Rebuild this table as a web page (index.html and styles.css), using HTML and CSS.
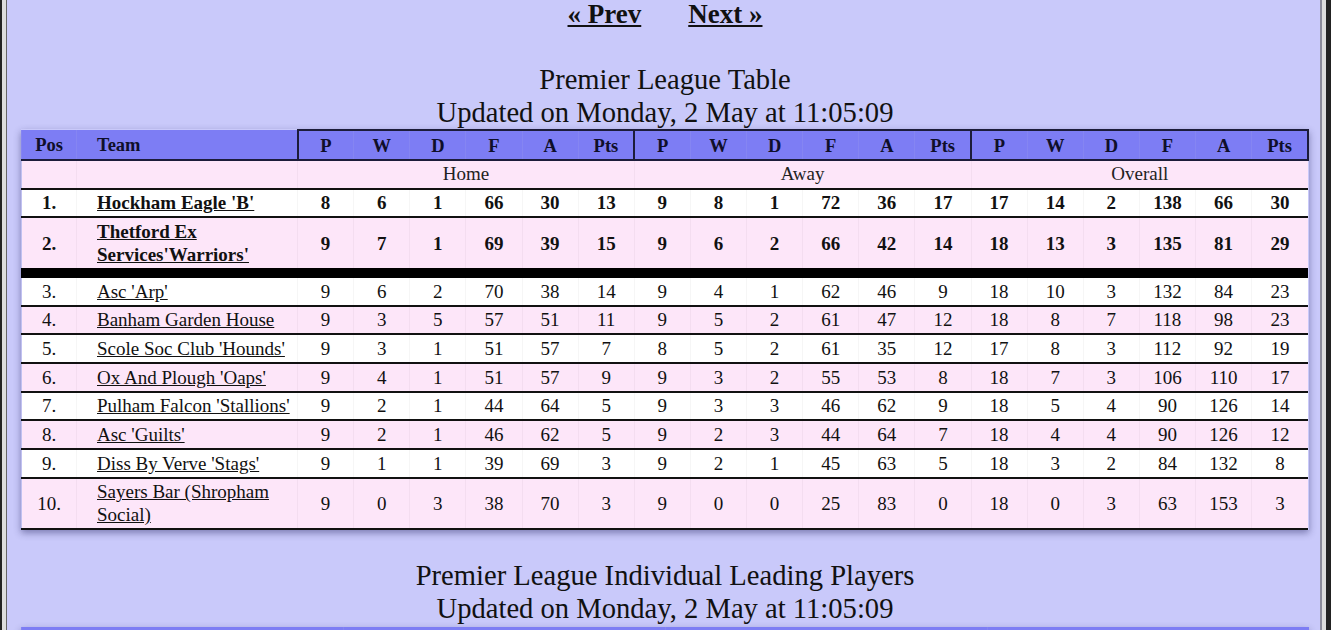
FILE: index.html
```html
<!DOCTYPE html>
<html lang="en">
<head>
<meta charset="utf-8">
<title>Premier League Table</title>
<link rel="stylesheet" href="styles.css">
</head>
<body>
<div class="frame-outer">
<div class="frame-mid">
<div class="page">
  <nav class="pager">
    <a href="#" class="pager-link">« Prev</a>
    <a href="#" class="pager-link">Next »</a>
  </nav>

  <h2 class="title">Premier League Table<br>Updated on Monday, 2 May at 11:05:09</h2>

  <table class="league">
    <colgroup>
      <col class="c-pos"><col class="c-team">
      <col><col><col><col><col><col>
      <col><col><col><col><col><col>
      <col><col><col><col><col><col>
    </colgroup>
    <thead>
      <tr class="head">
        <th>Pos</th><th class="team">Team</th>
        <th class="gs">P</th><th class="st">W</th><th class="st">D</th><th class="st">F</th><th class="st">A</th><th class="st">Pts</th>
        <th class="gs">P</th><th class="st">W</th><th class="st">D</th><th class="st">F</th><th class="st">A</th><th class="st">Pts</th>
        <th class="gs">P</th><th class="st">W</th><th class="st">D</th><th class="st">F</th><th class="st">A</th><th class="st ge">Pts</th>
      </tr>
    </thead>
    <tbody>
      <tr class="sub pink">
        <td></td><td></td>
        <td colspan="6">Home</td>
        <td colspan="6">Away</td>
        <td colspan="6">Overall</td>
      </tr>
      <tr class="white bold">
        <td>1.</td><td class="team"><a href="#">Hockham Eagle 'B'</a></td>
        <td>8</td><td>6</td><td>1</td><td>66</td><td>30</td><td>13</td>
        <td>9</td><td>8</td><td>1</td><td>72</td><td>36</td><td>17</td>
        <td>17</td><td>14</td><td>2</td><td>138</td><td>66</td><td>30</td>
      </tr>
      <tr class="pink bold promo">
        <td>2.</td><td class="team"><a href="#">Thetford Ex Services'Warriors'</a></td>
        <td>9</td><td>7</td><td>1</td><td>69</td><td>39</td><td>15</td>
        <td>9</td><td>6</td><td>2</td><td>66</td><td>42</td><td>14</td>
        <td>18</td><td>13</td><td>3</td><td>135</td><td>81</td><td>29</td>
      </tr>
      <tr class="white">
        <td>3.</td><td class="team"><a href="#">Asc 'Arp'</a></td>
        <td>9</td><td>6</td><td>2</td><td>70</td><td>38</td><td>14</td>
        <td>9</td><td>4</td><td>1</td><td>62</td><td>46</td><td>9</td>
        <td>18</td><td>10</td><td>3</td><td>132</td><td>84</td><td>23</td>
      </tr>
      <tr class="pink">
        <td>4.</td><td class="team"><a href="#">Banham Garden House</a></td>
        <td>9</td><td>3</td><td>5</td><td>57</td><td>51</td><td>11</td>
        <td>9</td><td>5</td><td>2</td><td>61</td><td>47</td><td>12</td>
        <td>18</td><td>8</td><td>7</td><td>118</td><td>98</td><td>23</td>
      </tr>
      <tr class="white">
        <td>5.</td><td class="team"><a href="#">Scole Soc Club 'Hounds'</a></td>
        <td>9</td><td>3</td><td>1</td><td>51</td><td>57</td><td>7</td>
        <td>8</td><td>5</td><td>2</td><td>61</td><td>35</td><td>12</td>
        <td>17</td><td>8</td><td>3</td><td>112</td><td>92</td><td>19</td>
      </tr>
      <tr class="pink">
        <td>6.</td><td class="team"><a href="#">Ox And Plough 'Oaps'</a></td>
        <td>9</td><td>4</td><td>1</td><td>51</td><td>57</td><td>9</td>
        <td>9</td><td>3</td><td>2</td><td>55</td><td>53</td><td>8</td>
        <td>18</td><td>7</td><td>3</td><td>106</td><td>110</td><td>17</td>
      </tr>
      <tr class="white">
        <td>7.</td><td class="team"><a href="#">Pulham Falcon 'Stallions'</a></td>
        <td>9</td><td>2</td><td>1</td><td>44</td><td>64</td><td>5</td>
        <td>9</td><td>3</td><td>3</td><td>46</td><td>62</td><td>9</td>
        <td>18</td><td>5</td><td>4</td><td>90</td><td>126</td><td>14</td>
      </tr>
      <tr class="pink">
        <td>8.</td><td class="team"><a href="#">Asc 'Guilts'</a></td>
        <td>9</td><td>2</td><td>1</td><td>46</td><td>62</td><td>5</td>
        <td>9</td><td>2</td><td>3</td><td>44</td><td>64</td><td>7</td>
        <td>18</td><td>4</td><td>4</td><td>90</td><td>126</td><td>12</td>
      </tr>
      <tr class="white">
        <td>9.</td><td class="team"><a href="#">Diss By Verve 'Stags'</a></td>
        <td>9</td><td>1</td><td>1</td><td>39</td><td>69</td><td>3</td>
        <td>9</td><td>2</td><td>1</td><td>45</td><td>63</td><td>5</td>
        <td>18</td><td>3</td><td>2</td><td>84</td><td>132</td><td>8</td>
      </tr>
      <tr class="pink">
        <td>10.</td><td class="team"><a href="#">Sayers Bar (Shropham Social)</a></td>
        <td>9</td><td>0</td><td>3</td><td>38</td><td>70</td><td>3</td>
        <td>9</td><td>0</td><td>0</td><td>25</td><td>83</td><td>0</td>
        <td>18</td><td>0</td><td>3</td><td>63</td><td>153</td><td>3</td>
      </tr>
    </tbody>
  </table>

  <h2 class="title title-second">Premier League Individual Leading Players<br>Updated on Monday, 2 May at 11:05:09</h2>

  <table class="league players">
    <thead>
      <tr class="head">
        <th>Pos</th><th class="team">Player</th><th>Team</th><th>Goals</th>
      </tr>
    </thead>
  </table>
</div>
</div>
</div>
</body>
</html>
```

FILE: styles.css
```css
html, body {
  margin: 0;
  padding: 0;
  background: #c9c9fa;
}

body {
  font-family: "Liberation Serif", "Times New Roman", serif;
  color: #111;
  height: 630px;
  overflow: hidden;
}

.frame-outer {
  border-left: 2px solid #222;
  border-right: 5px solid #222;
  min-height: 630px;
}

.frame-mid {
  border-left: 4px solid #dcdcdc;
  border-right: 4px solid #dcdcdc;
  min-height: 630px;
}

.page {
  border-left: 1px solid #666;
  border-right: 2px solid #8a8a9a;
  background: #c9c9fa;
  min-height: 630px;
  padding: 0 11px 0 14px;
}

.pager {
  display: flex;
  justify-content: center;
  gap: 47px;
  font-weight: bold;
  font-size: 27px;
  line-height: 28px;
}

.pager-link {
  color: #111;
  text-decoration: underline;
}

.title {
  margin: 35px 0 0 0;
  font-weight: normal;
  font-size: 28.6px;
  line-height: 33px;
  text-align: center;
}

.title-second {
  margin-top: 29px;
}

.league {
  width: 1288px;
  table-layout: fixed;
  border-collapse: collapse;
  box-shadow: 0 3px 7px rgba(30, 30, 90, 0.45);
  font-size: 19px;
  line-height: 23px;
}

.c-pos { width: 55px; }
.c-team { width: 221px; }

.league th,
.league td {
  text-align: center;
  padding: 1.83px 2px;
  vertical-align: middle;
}

.league .team {
  text-align: left;
  padding-left: 20px;
  padding-right: 3px;
}

.head {
  background: #7d7df4;
  border-bottom: 2px solid #1c1c3a;
}

.head th {
  font-weight: bold;
  font-size: 18.5px;
  padding-top: 3.5px;
  padding-bottom: 1.5px;
  color: #0f0f2a;
  border-left: 1px solid #8585f2;
}

.head th.st,
.head th.gs {
  border-top: 2px solid #1c1c3a;
}

.head th.gs {
  border-left: 2px solid #1c1c3a;
}

.head th.ge {
  border-right: 2px solid #1c1c3a;
}

.league td {
  border-left: 1px solid rgba(0, 0, 0, 0.035);
}

.sub td {
  color: #222;
  padding-top: 0.5px;
  padding-bottom: 3.16px;
}

.league tbody tr {
  border-bottom: 2px solid #111;
}

.league tbody tr.promo {
  border-bottom: 10px solid #000;
}

.white { background: #ffffff; }
.pink { background: #fde6f9; }

.bold td { font-weight: bold; }

.league a {
  color: #111;
  text-decoration: underline;
}

.players {
  margin-top: 2px;
}
```
